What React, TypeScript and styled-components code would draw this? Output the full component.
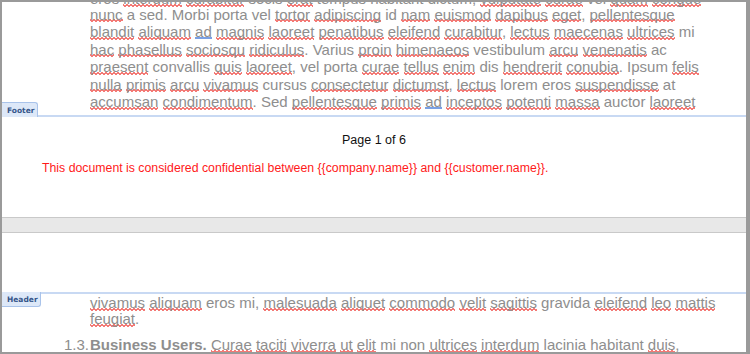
import React from "react";
import styled, { createGlobalStyle } from "styled-components";

const GlobalStyle = createGlobalStyle`
  html, body {
    margin: 0;
    padding: 0;
    background: #ffffff;
  }
  body {
    font-family: "Liberation Sans", Arial, Helvetica, sans-serif;
  }
`;

const Frame = styled.div`
  box-sizing: border-box;
  width: 750px;
  height: 354px;
  border-style: solid;
  border-color: #9a9a9a;
  border-width: 2px 4px 2px 2px;
  display: flex;
  flex-direction: column;
  overflow: hidden;
  background: #ffffff;
`;

const PageBottom = styled.div`
  height: 215px;
  flex-shrink: 0;
  display: flex;
  flex-direction: column;
  background: #ffffff;
`;

const PageTop = styled.div`
  flex: 1;
  display: flex;
  flex-direction: column;
  background: #ffffff;
  min-height: 0;
`;

const Body = styled.div<{ $height?: number }>`
  position: relative;
  height: ${({ $height }) => ($height ? `${$height}px` : "auto")};
  flex: ${({ $height }) => ($height ? "none" : "1")};
  overflow: hidden;
  padding-left: 88px;
  padding-right: 20px;
`;

const Text = styled.div<{ $shift?: number; $lh: number }>`
  margin-top: ${({ $shift }) => $shift ?? 0}px;
  font-size: 15px;
  line-height: ${({ $lh }) => $lh}px;
  color: #8e8e8e;
  white-space: nowrap;
`;

const Line = styled.div<{ $pull?: number }>`
  margin-bottom: ${({ $pull }) => ($pull ? `-${$pull}px` : "0")};
`;

const Para = styled.div`
  margin-top: 10px;
  display: flex;
  margin-left: -26px;
`;

const Num = styled.span`
  width: 26px;
  flex-shrink: 0;
`;

const Bold = styled.b`
  font-weight: bold;
`;

const Miss = styled.span`
  background-image: radial-gradient(circle, #ef4a44 0.6px, transparent 1px),
    radial-gradient(circle, #ef4a44 0.6px, transparent 1px);
  background-size: 4px 2px, 4px 2px;
  background-position: 0 calc(100% - 0.5px), 2px calc(100% - 1.5px);
  background-repeat: repeat-x;
`;

const Grammar = styled.span`
  background-image: linear-gradient(#7aa0e4, #7aa0e4);
  background-size: 100% 2px;
  background-position: 0 calc(100% - 1px);
  background-repeat: no-repeat;
`;

const FooterArea = styled.div`
  position: relative;
  flex: 1;
  border-top: 2px solid #c8d9f3;
  display: flex;
  flex-direction: column;
  align-items: center;
  padding-top: 15px;
`;

const HeaderArea = styled.div`
  position: relative;
  height: 59px;
  flex-shrink: 0;
  border-bottom: 2px solid #c8d9f3;
`;

const Tab = styled.div<{ $below?: boolean; $w: number }>`
  position: absolute;
  left: 0;
  ${({ $below }) => ($below ? "top: 100%;" : "bottom: 100%;")}
  box-sizing: border-box;
  width: ${({ $w }) => $w}px;
  height: 15px;
  background: #dde8f8;
  border: 1px solid #a9c3ea;
  border-left: none;
  ${({ $below }) =>
    $below
      ? "border-top: none; border-bottom-right-radius: 3px;"
      : "border-bottom: none; border-top-right-radius: 3px;"}
  font-family: "DejaVu Sans", Verdana, sans-serif;
  font-size: 7.5px;
  font-weight: bold;
  color: #36568a;
  display: flex;
  align-items: center;
  padding-left: 5px;
  z-index: 2;
`;

const PageNo = styled.div`
  font-size: 12.5px;
  color: #111111;
  line-height: 16px;
`;

const Confidential = styled.div`
  align-self: flex-start;
  margin-left: 40px;
  margin-top: 12px;
  font-size: 12.3px;
  line-height: 16px;
  color: #ff1a1a;
`;

const Gap = styled.div`
  height: 14px;
  flex-shrink: 0;
  background: #e8e8e8;
  border-top: 1px solid #c9c9c9;
  border-bottom: 1px solid #c9c9c9;
`;

// words wrapped in * are misspelled, in ~ are flagged by grammar check
function Marked({ text }: { text: string }) {
  const parts = text.split(/(\*[^*]+\*|~[^~]+~)/);
  return (
    <>
      {parts.map((p, i) => {
        if (p.startsWith("*")) return <Miss key={i}>{p.slice(1, -1)}</Miss>;
        if (p.startsWith("~")) return <Grammar key={i}>{p.slice(1, -1)}</Grammar>;
        return <React.Fragment key={i}>{p}</React.Fragment>;
      })}
    </>
  );
}

const page1Lines = [
  "eros *interdum* *curabitur* socis *erat* tempus habitant dictum, *vulputate* *curae* vel *quam* *congue*",
  "*nunc* a sed. Morbi porta vel *tortor* *adipiscing* id *nam* *euismod* *dapibus* *eget*, *pellentesque*",
  "*blandit* *aliquam* ~ad~ *magnis* *laoreet* *penatibus* *eleifend* *curabitur*, *lectus* *maecenas* *ultrices* mi",
  "*hac* *phasellus* *sociosqu* *ridiculus*. Varius *proin* *himenaeos* vestibulum *arcu* *venenatis* ac",
  "*praesent* convallis *quis* *laoreet*, vel porta *curae* *tellus* *enim* dis *hendrerit* *conubia*. Ipsum *felis*",
  "*nulla* *primis* *arcu* *vivamus* cursus *consectetur* *dictumst*, *lectus* lorem eros *suspendisse* at",
  "*accumsan* *condimentum*. Sed *pellentesque* *primis* ~ad~ *inceptos* *potenti* *massa* auctor *laoreet*",
];

const page2Lines = [
  "*vivamus* *aliquam* eros mi, *malesuada* *aliquet* *commodo* *velit* *sagittis* gravida *eleifend* *leo* *mattis*",
  "*feugiat*.",
];

export default function App() {
  return (
    <>
      <GlobalStyle />
      <Frame>
        <PageBottom>
          <Body $height={113}>
            <Text $shift={-12} $lh={17.5}>
              {page1Lines.map((l, i) => (
                <Line key={i} $pull={i === 0 ? 2 : 0}>
                  <Marked text={l} />
                </Line>
              ))}
            </Text>
          </Body>
          <FooterArea>
            <Tab $w={36}>Footer</Tab>
            <PageNo>Page 1 of 6</PageNo>
            <Confidential>
              This document is considered confidential between {"{{company.name}}"} and{" "}
              {"{{customer.name}}"}.
            </Confidential>
          </FooterArea>
        </PageBottom>
        <Gap />
        <PageTop>
          <HeaderArea>
            <Tab $below $w={39}>
              Header
            </Tab>
          </HeaderArea>
          <Body>
            <Text $shift={1} $lh={16}>
              {page2Lines.map((l, i) => (
                <Line key={i}>
                  <Marked text={l} />
                </Line>
              ))}
              <Para>
                <Num>1.3.</Num>
                <span>
                  <Bold>Business Users.</Bold>{" "}
                  <Marked text="*Curae* *taciti* *viverra* *ut* *elit* mi non *ultrices* *interdum* lacinia habitant *duis*," />
                </span>
              </Para>
            </Text>
          </Body>
        </PageTop>
      </Frame>
    </>
  );
}
